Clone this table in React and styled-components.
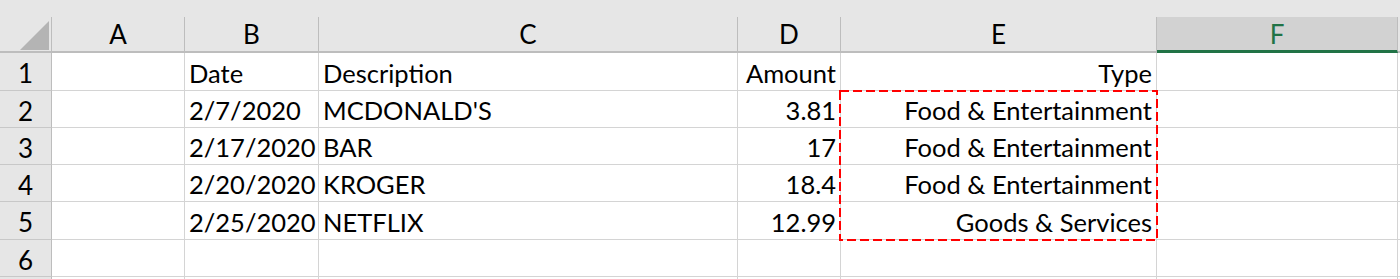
import React from "react";
import styled, { createGlobalStyle, css } from "styled-components";

const GlobalStyle = createGlobalStyle`
  html, body { margin: 0; padding: 0; background: #ffffff; }
  body { font-family: Lato, "Open Sans", sans-serif; }
`;

const COLS = ["A", "B", "C", "D", "E", "F"];
const ACTIVE_COL = "F";

const rows = [
  { n: 1, date: "Date", desc: "Description", amount: "Amount", type: "Type" },
  { n: 2, date: "2/7/2020", desc: "MCDONALD'S", amount: "3.81", type: "Food & Entertainment" },
  { n: 3, date: "2/17/2020", desc: "BAR", amount: "17", type: "Food & Entertainment" },
  { n: 4, date: "2/20/2020", desc: "KROGER", amount: "18.4", type: "Food & Entertainment" },
  { n: 5, date: "2/25/2020", desc: "NETFLIX", amount: "12.99", type: "Goods & Services" },
  { n: 6 },
  { n: null },
];

const Sheet = styled.div`
  position: relative;
  display: grid;
  grid-template-columns: 52px 133px 134px 419px 103px 316px 241px 1fr;
  grid-template-rows: 17px 36px 38px 37px 37px 37px 38px 37px 37px;
  width: 1400px;
  height: 279px;
  overflow: hidden;
  font-family: Lato, "Open Sans", sans-serif;
  color: #000;
`;

const TopStrip = styled.div`
  grid-column: 1 / -1;
  background: #e6e6e6;
`;

const Corner = styled.div`
  box-sizing: border-box;
  background: #e6e6e6;
  border-right: 1px solid #bdbdbd;
  border-bottom: 2px solid #bdbdbd;
  display: flex;
  align-items: flex-end;
  justify-content: flex-end;
  padding: 0 2px 1px 0;
`;

const ColHeader = styled.div`
  box-sizing: border-box;
  background: ${(p) => (p.$active ? "#d2d2d2" : "#e6e6e6")};
  color: ${(p) => (p.$active ? "#217346" : "#000")};
  border-right: 1px solid ${(p) => (p.$filler ? "transparent" : "#bdbdbd")};
  border-bottom: ${(p) => (p.$active ? "3px solid #217346" : "2px solid #bdbdbd")};
  display: flex;
  align-items: center;
  justify-content: center;
  font-size: 26px;
  padding-top: ${(p) => (p.$active ? "1px" : "0")};
`;

const RowHeader = styled.div`
  box-sizing: border-box;
  background: #e6e6e6;
  border-right: 1px solid #bdbdbd;
  border-bottom: 1px solid #c8c8c8;
  display: flex;
  align-items: center;
  justify-content: center;
  font-size: 26px;
  padding-top: 3px;
`;

const Cell = styled.div`
  box-sizing: border-box;
  border-right: 1px solid #d4d4d4;
  border-bottom: 1px solid #d4d4d4;
  display: flex;
  align-items: center;
  padding: 2px 4px 0 4px;
  font-size: 25.5px;
  white-space: nowrap;
  overflow: visible;
  ${(p) =>
    p.$right
      ? css`justify-content: flex-end;`
      : css`justify-content: flex-start;`}
`;

const Marquee = styled.svg`
  position: absolute;
  left: 839px;
  top: 90px;
  width: 319px;
  height: 151px;
  pointer-events: none;
`;

const CornerTriangle = () => (
  <svg width="29" height="29" viewBox="0 0 29 29">
    <polygon points="29,0 29,29 0,29" fill="#b4b4b4" />
  </svg>
);

export default function App() {
  return (
    <>
      <GlobalStyle />
      <Sheet>
        <TopStrip />
        <Corner>
          <CornerTriangle />
        </Corner>
        {COLS.map((c) => (
          <ColHeader key={c} $active={c === ACTIVE_COL}>
            {c}
          </ColHeader>
        ))}
        <ColHeader $filler />
        {rows.map((r, i) => (
          <React.Fragment key={i}>
            <RowHeader>{r.n}</RowHeader>
            <Cell />
            <Cell>{r.date}</Cell>
            <Cell>{r.desc}</Cell>
            <Cell $right>{r.amount}</Cell>
            <Cell $right>{r.type}</Cell>
            <Cell />
            <Cell />
          </React.Fragment>
        ))}
        <Marquee viewBox="0 0 319 151">
          <rect
            x="1"
            y="1"
            width="317"
            height="149"
            fill="none"
            stroke="#ff0000"
            strokeWidth="2"
            strokeDasharray="9 4"
          />
        </Marquee>
      </Sheet>
    </>
  );
}
